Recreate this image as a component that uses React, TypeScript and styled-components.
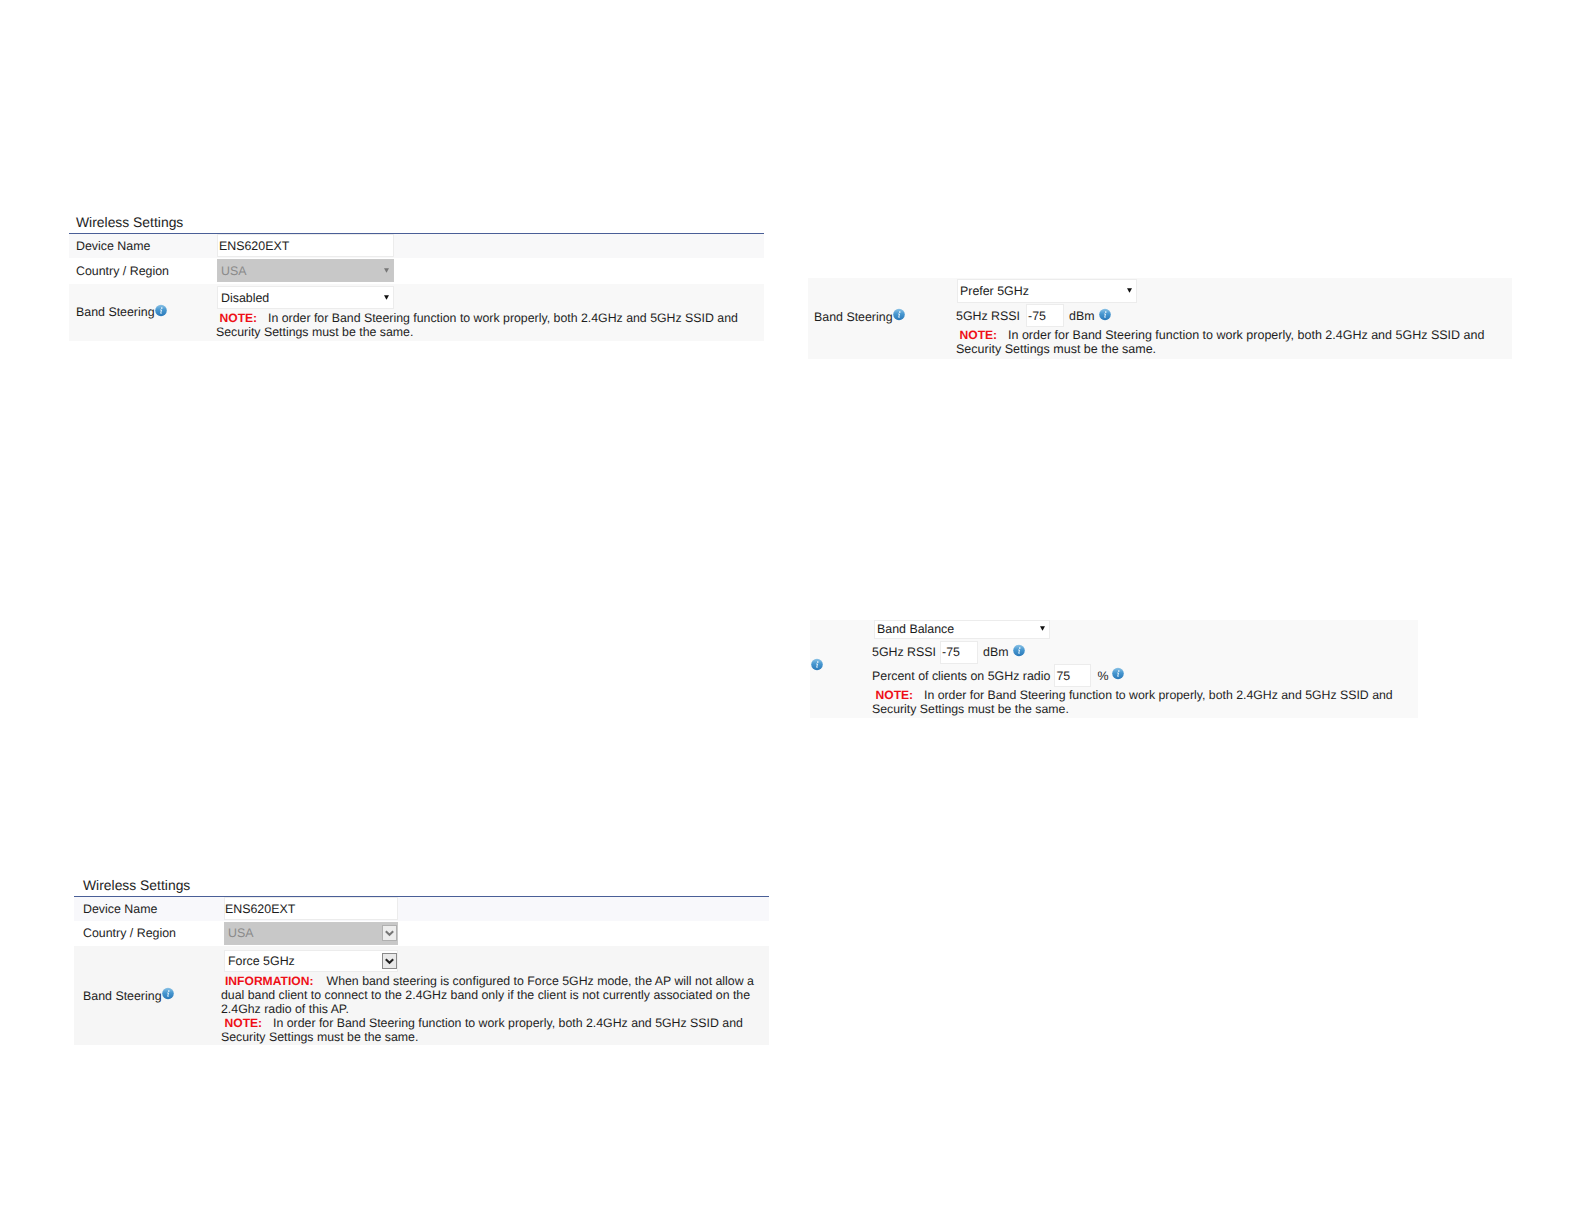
import React from "react";
import styled, { createGlobalStyle } from "styled-components";

const GlobalStyle = createGlobalStyle`
  * {
    box-sizing: border-box;
  }

  body {
    margin: 0;
    background-color: #ffffff;
    font-family: "Liberation Sans", Arial, sans-serif;
    text-rendering: geometricPrecision;
  }
`;

const Page = styled.div`
  display: grid;
  grid-template-columns: 739px 776px;
  width: 1584px;
  height: 1224px;
  padding-left: 69px;
  overflow: hidden;
`;

const Column = styled.div<{ $top: number; $gap: number }>`
  display: flex;
  flex-direction: column;
  align-items: flex-start;
  gap: ${({ $gap }) => $gap}px;
  padding-top: ${({ $top }) => $top}px;
`;

const Panel = styled.section<{ $width: number; $indent?: number }>`
  width: ${({ $width }) => $width}px;
  margin-left: ${({ $indent = 0 }) => $indent}px;
  color: #1e1e1e;
`;

const PanelTitle = styled.h2<{ $indent: number }>`
  display: flex;
  align-items: center;
  height: 24px;
  margin: 0;
  padding-left: ${({ $indent }) => $indent}px;
  border-bottom: 1px solid #4a5f97;
  font-size: 13.9px;
  font-weight: 400;
`;

const Row = styled.div<{ $height: number; $labelWidth: number; $bg?: string }>`
  display: grid;
  grid-template-columns: ${({ $labelWidth }) => $labelWidth}px 1fr;
  height: ${({ $height }) => $height}px;
  background-color: ${({ $bg = "#ffffff" }) => $bg};
`;

const Label = styled.div<{ $indent: number; $lift?: number }>`
  display: flex;
  align-items: center;
  padding-left: ${({ $indent }) => $indent}px;
  padding-bottom: ${({ $lift = 0 }) => $lift}px;
  font-size: 12.4px;
  white-space: nowrap;
`;

const Controls = styled.div<{ $top: number }>`
  display: flex;
  flex-direction: column;
  align-items: flex-start;
  padding-top: ${({ $top }) => $top}px;
`;

const Field = styled.div<{
  $width: number;
  $height: number;
  $indent?: number;
  $pad?: number;
  $lift?: number;
  $disabled?: boolean;
}>`
  display: flex;
  align-items: center;
  justify-content: space-between;
  flex-shrink: 0;
  width: ${({ $width }) => $width}px;
  height: ${({ $height }) => $height}px;
  margin-left: ${({ $indent = 0 }) => $indent}px;
  padding: 0 4px ${({ $lift = 0 }) => $lift}px ${({ $pad = 1 }) => $pad}px;
  border: 1px solid ${({ $disabled }) => ($disabled ? "#c9c9c9" : "#ececec")};
  background-color: ${({ $disabled }) => ($disabled ? "#c8c8c8" : "#ffffff")};
  color: ${({ $disabled }) => ($disabled ? "#8b8b8b" : "#1c1c1c")};
  font-size: 12.4px;
  white-space: nowrap;
`;

const InlineRow = styled.div<{ $height: number; $lift?: number }>`
  display: flex;
  align-items: center;
  height: ${({ $height }) => $height}px;
  padding-bottom: ${({ $lift = 0 }) => $lift}px;
  font-size: 12.4px;
  white-space: nowrap;
`;

const Unit = styled.span<{ $left: number; $right: number }>`
  margin-left: ${({ $left }) => $left}px;
  margin-right: ${({ $right }) => $right}px;
`;

const Notes = styled.div<{ $size: number; $top?: number }>`
  padding-top: ${({ $top = 0 }) => $top}px;
  font-size: ${({ $size }) => $size}px;
  line-height: 14px;
  white-space: nowrap;
`;

const NoteLine = styled.div<{ $indent?: number }>`
  display: flex;
  height: 14px;
  padding-left: ${({ $indent = 0 }) => $indent}px;
`;

const Tag = styled.strong<{ $width: number }>`
  width: ${({ $width }) => $width}px;
  color: #ee0f17;
  font-size: 12.1px;
  font-weight: 700;
`;

const Icon = styled.svg<{ $raise?: number }>`
  display: block;
  flex-shrink: 0;
  margin-bottom: ${({ $raise = 0 }) => $raise}px;
`;

const DropButton = styled.span<{ $disabled?: boolean }>`
  display: flex;
  align-items: center;
  justify-content: center;
  width: 15px;
  height: 16px;
  margin-right: -4px;
  border: 1px solid ${({ $disabled }) => ($disabled ? "#b0b0b0" : "#8a8a8a")};
  background-color: ${({ $disabled }) => ($disabled ? "#ededed" : "#e9e9e9")};
`;

const InfoIcon = ({ raise = 4 }: { raise?: number }) => (
  <Icon $raise={raise} width="12" height="13" viewBox="0 0 12 13">
    <defs>
      <linearGradient id="info-fill" x1="0" y1="0" x2="0" y2="1">
        <stop offset="0" stopColor="#8cc3e6" />
        <stop offset="0.45" stopColor="#4797d0" />
        <stop offset="1" stopColor="#2a78b8" />
      </linearGradient>
    </defs>
    <circle cx="6" cy="6.5" r="5.8" fill="url(#info-fill)" />
    <circle cx="6.8" cy="4.1" r="0.8" fill="#ffffff" />
    <path
      d="M5.2 6h1.3L5.7 9.3h0.9"
      fill="none"
      stroke="#e6f3fb"
      strokeWidth="1"
    />
  </Icon>
);

const Arrow = ({ color = "#111111" }: { color?: string }) => (
  <Icon width="5" height="5" viewBox="0 0 5 5">
    <path d="M0 0.3h5L2.5 4.8z" fill={color} />
  </Icon>
);

const Chevron = ({ color = "#222222" }: { color?: string }) => (
  <Icon width="9" height="7" viewBox="0 0 9 7">
    <path d="M0.8 1.2L4.5 4.8L8.2 1.2" fill="none" stroke={color} strokeWidth="2" />
  </Icon>
);

const BandNote = () => (
  <>
    <NoteLine $indent={3.5}>
      <Tag $width={48.5}>NOTE:</Tag>
      <span>
        In order for Band Steering function to work properly, both 2.4GHz and
        5GHz SSID and
      </span>
    </NoteLine>
    <NoteLine>Security Settings must be the same.</NoteLine>
  </>
);

const RssiRow = ({ height, gap }: { height: number; gap: number }) => (
  <InlineRow $height={height}>
    5GHz RSSI
    <Field $width={38} $height={23} $indent={gap}>
      -75
    </Field>
    <Unit $left={5} $right={4}>
      dBm
    </Unit>
    <InfoIcon raise={3} />
  </InlineRow>
);

export default function App() {
  return (
    <>
      <GlobalStyle />
      <Page>
        <Column $top={210} $gap={532}>
          <Panel $width={695}>
            <PanelTitle $indent={7}>Wireless Settings</PanelTitle>
            <Row $height={24} $labelWidth={147} $bg="#f8f8f9">
              <Label $indent={7} $lift={1}>
                Device Name
              </Label>
              <Controls $top={0}>
                <Field $width={177} $height={23} $indent={1}>
                  ENS620EXT
                </Field>
              </Controls>
            </Row>
            <Row $height={26} $labelWidth={147}>
              <Label $indent={7}>Country / Region</Label>
              <Controls $top={1}>
                <Field $width={177} $height={23} $indent={1} $pad={3} $disabled>
                  USA
                  <Arrow color="#777777" />
                </Field>
              </Controls>
            </Row>
            <Row $height={57} $labelWidth={147} $bg="#f8f8f8">
              <Label $indent={7} $lift={1}>
                Band Steering
                <InfoIcon />
              </Label>
              <Controls $top={2}>
                <Field $width={177} $height={23} $indent={1} $pad={3}>
                  Disabled
                  <Arrow />
                </Field>
                <Notes $size={12.33} $top={2}>
                  <BandNote />
                </Notes>
              </Controls>
            </Row>
          </Panel>

          <Panel $width={695} $indent={5}>
            <PanelTitle $indent={9}>Wireless Settings</PanelTitle>
            <Row $height={24} $labelWidth={147} $bg="#f8f8fb">
              <Label $indent={9} $lift={1}>
                Device Name
              </Label>
              <Controls $top={0}>
                <Field $width={174} $height={23} $indent={3} $pad={0}>
                  ENS620EXT
                </Field>
              </Controls>
            </Row>
            <Row $height={25} $labelWidth={147}>
              <Label $indent={9} $lift={1}>
                Country / Region
              </Label>
              <Controls $top={1}>
                <Field
                  $width={174}
                  $height={23}
                  $indent={3}
                  $pad={3}
                  $lift={1}
                  $disabled
                >
                  USA
                  <DropButton $disabled>
                    <Chevron color="#777777" />
                  </DropButton>
                </Field>
              </Controls>
            </Row>
            <Row $height={99} $labelWidth={147} $bg="#f6f6f6">
              <Label $indent={9}>
                Band Steering
                <InfoIcon />
              </Label>
              <Controls $top={4}>
                <Field $width={174} $height={22} $indent={3} $pad={3}>
                  Force 5GHz
                  <DropButton>
                    <Chevron />
                  </DropButton>
                </Field>
                <Notes $size={12.33} $top={2}>
                  <NoteLine $indent={4}>
                    <Tag $width={101.5}>INFORMATION:</Tag>
                    <span>
                      When band steering is configured to Force 5GHz mode, the
                      AP will not allow a
                    </span>
                  </NoteLine>
                  <NoteLine>
                    dual band client to connect to the 2.4GHz band only if the
                    client is not currently associated on the
                  </NoteLine>
                  <NoteLine>2.4Ghz radio of this AP.</NoteLine>
                  <BandNote />
                </Notes>
              </Controls>
            </Row>
          </Panel>
        </Column>

        <Column $top={278} $gap={261}>
          <Panel $width={704}>
            <Row $height={81} $labelWidth={148} $bg="#f8f8f8">
              <Label $indent={6} $lift={4}>
                Band Steering
                <InfoIcon />
              </Label>
              <Controls $top={1}>
                <Field
                  $width={180}
                  $height={24}
                  $indent={1}
                  $pad={2}
                  $lift={1}
                >
                  Prefer 5GHz
                  <Arrow />
                </Field>
                <RssiRow height={25} gap={6} />
                <Notes $size={12.5}>
                  <BandNote />
                </Notes>
              </Controls>
            </Row>
          </Panel>

          <Panel $width={608} $indent={2}>
            <Row $height={98} $labelWidth={62} $bg="#f9f9f9">
              <Label $indent={1} $lift={5}>
                <InfoIcon />
              </Label>
              <Controls $top={0}>
                <Field
                  $width={176}
                  $height={19}
                  $indent={2}
                  $pad={2}
                  $lift={2}
                >
                  Band Balance
                  <Arrow />
                </Field>
                <RssiRow height={26} gap={4} />
                <InlineRow $height={23} $lift={2}>
                  Percent of clients on 5GHz radio
                  <Field $width={37} $height={23} $indent={4}>
                    75
                  </Field>
                  <Unit $left={6} $right={4}>
                    %
                  </Unit>
                  <InfoIcon />
                </InlineRow>
                <Notes $size={12.3}>
                  <BandNote />
                </Notes>
              </Controls>
            </Row>
          </Panel>
        </Column>
      </Page>
    </>
  );
}
